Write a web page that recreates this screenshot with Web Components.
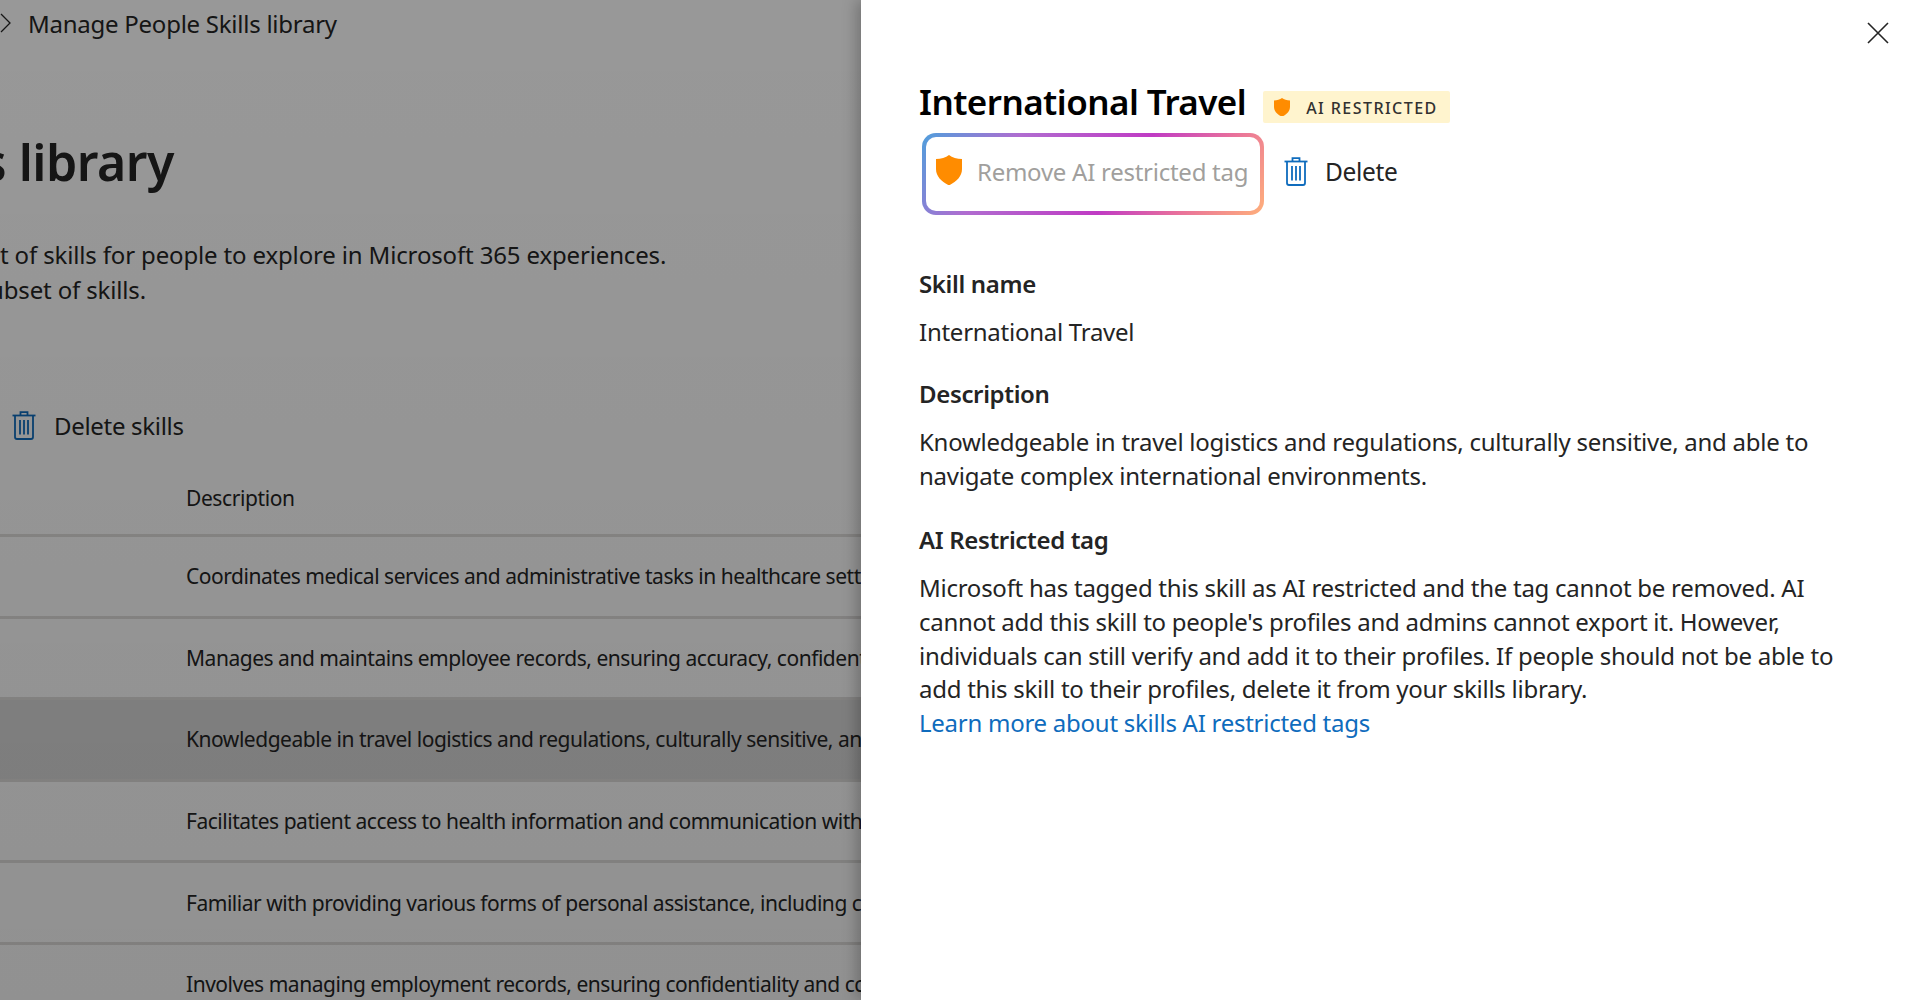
<!DOCTYPE html>
<html lang="en">
<head>
<meta charset="utf-8">
<title>Manage People Skills library</title>
<style>
  html, body { margin: 0; height: 1000px; overflow: hidden; }
  body { font-family: "Noto Sans", "Open Sans", sans-serif; background: #fff; }
</style>
</head>
<body>
<skills-app>
  <library-page slot="page">
    <library-row>Coordinates medical services and administrative tasks in healthcare sett</library-row>
    <library-row>Manages and maintains employee records, ensuring accuracy, confident</library-row>
    <library-row selected>Knowledgeable in travel logistics and regulations, culturally sensitive, an</library-row>
    <library-row>Facilitates patient access to health information and communication with</library-row>
    <library-row>Familiar with providing various forms of personal assistance, including c</library-row>
    <library-row>Involves managing employment records, ensuring confidentiality and cc</library-row>
  </library-page>
  <skill-panel slot="panel"></skill-panel>
</skills-app>
<script>
const shieldSvg = (size) => `<svg width="${size}" height="${size * 1.17}" viewBox="0 0 24 28" aria-hidden="true"><path fill="#ff8c00" d="M12 0 C15 2.6 19.4 3.6 24 3.6 V13 C24 20 18.6 25 12 28 C5.4 25 0 20 0 13 V3.6 C4.6 3.6 9 2.6 12 0 Z"/></svg>`;

class TrashIcon extends HTMLElement {
  constructor() {
    super();
    this.attachShadow({ mode: "open" }).innerHTML = `
      <style>:host { display: inline-flex; color: #0f6cbd; } svg { display: block; }</style>
      <svg width="24" height="29" viewBox="0 0 24 29" fill="none" stroke="currentColor" stroke-width="1.8" aria-hidden="true">
        <path d="M0.5 4.5 H23.5"/>
        <path d="M8.5 4.5 V1.2 H15.5 V4.5"/>
        <path d="M3 4.5 V26 Q3 28 5 28 H19 Q21 28 21 26 V4.5"/>
        <path d="M8 9 V23.5 M12 9 V23.5 M16 9 V23.5"/>
      </svg>`;
  }
}
customElements.define("trash-icon", TrashIcon);

class AiBadge extends HTMLElement {
  constructor() {
    super();
    this.attachShadow({ mode: "open" }).innerHTML = `
      <style>
        :host { display: inline-flex; align-items: center; box-sizing: border-box; height: 32px; padding: 1px 12px 0 11px; gap: 16px;
          background: #fff4ce; border-radius: 2px; color: #323130; font-size: 16px; font-weight: 500; letter-spacing: 1.45px; }
        svg { display: block; margin-top: -1px; }
      </style>
      ${shieldSvg(16)}<span>AI RESTRICTED</span>`;
  }
}
customElements.define("ai-badge", AiBadge);

class GradientButton extends HTMLElement {
  constructor() {
    super();
    this.attachShadow({ mode: "open" }).innerHTML = `
      <style>
        :host { display: inline-flex; align-items: flex-start; box-sizing: border-box; width: 342px; height: 82px; padding: 19px 10px 0 10px; gap: 15px;
          border: 4.5px solid transparent; border-radius: 14px; color: #a19f9d; font-size: 24px; white-space: nowrap; letter-spacing: -0.26px;
          background: linear-gradient(#fff, #fff) padding-box, linear-gradient(125deg, #4f9fdc 0%, #b06cd0 25%, #c03bc4 58%, #e8709c 78%, #ffb07a 100%) border-box; }
        svg { display: block; flex: none; margin-top: -1px; }
        span { line-height: 32px; margin-top: 0; }
      </style>
      ${shieldSvg(26)}<span><slot></slot></span>`;
  }
}
customElements.define("gradient-button", GradientButton);

class LibraryRow extends HTMLElement {
  constructor() {
    super();
    this.attachShadow({ mode: "open" }).innerHTML = `
      <style>
        :host { display: flex; align-items: center; box-sizing: border-box; height: 81.6px; padding: 0 0 0 186px; overflow: hidden; white-space: nowrap;
          font-size: 21px; letter-spacing: -0.47px; border-bottom: 3px solid #e1dfdd; }
        :host([selected]) { background: #dadada; }
      </style>
      <slot></slot>`;
  }
}
customElements.define("library-row", LibraryRow);

class LibraryPage extends HTMLElement {
  constructor() {
    super();
    this.attachShadow({ mode: "open" }).innerHTML = `
      <style>
        :host { display: block; position: relative; height: 1000px; overflow: hidden; background: #fff; color: #242424; }
        :host::after { content: ""; position: absolute; inset: 0; background: linear-gradient(rgba(0,0,0,.405), rgba(0,0,0,.43)); }
        .crumb { display: flex; align-items: center; gap: 16px; height: 46px; font-size: 24px; letter-spacing: -0.25px; }
        .crumb svg { display: block; margin-left: 0; }
        h1 { margin: 84px 0 0 0; font-size: 50px; line-height: 64px; font-weight: 600; letter-spacing: -0.5px; white-space: nowrap; }
        h1 span { display: inline-block; margin-left: -18px; }
        .intro { margin: 43px 0 0 0; font-size: 24px; line-height: 35px; letter-spacing: -0.15px; white-space: nowrap; }
        .intro span { display: inline-block; margin-left: -11px; }
        .toolbar { display: flex; align-items: center; gap: 18px; margin-top: 102px; padding-left: 12px; height: 32px; font-size: 24px; letter-spacing: -0.3px; }
        .head { display: flex; align-items: center; box-sizing: border-box; height: 88px; padding: 12px 0 0 186px; margin-top: 8px; font-size: 21px; letter-spacing: -0.4px; border-bottom: 3px solid #e1dfdd; }
      </style>
      <div class="crumb">
        <svg width="12" height="22" viewBox="0 0 12 22" fill="none" stroke="#242424" stroke-width="1.3" aria-hidden="true"><path d="M1 2 L10 11 L1 20"/></svg>
        <span>Manage People Skills library</span>
      </div>
      <h1><span>s library</span></h1>
      <div class="intro">t of skills for people to explore in Microsoft 365 experiences.<br><span>ubset of skills.</span></div>
      <div class="toolbar"><trash-icon></trash-icon><span>Delete skills</span></div>
      <div class="head">Description</div>
      <slot></slot>`;
  }
}
customElements.define("library-page", LibraryPage);

class SkillPanel extends HTMLElement {
  constructor() {
    super();
    this.attachShadow({ mode: "open" }).innerHTML = `
      <style>
        :host { display: block; position: relative; box-sizing: border-box; height: 1000px; padding: 81px 20px 0 58px; background: #fff; color: #242424;
          box-shadow: -4px 0 14px rgba(0,0,0,.25); }
        .close { position: absolute; top: 21px; right: 30px; display: block; }
        .title { display: flex; align-items: center; gap: 17px; }
        h2 { margin: 0; font-size: 35px; line-height: 42px; font-weight: 600; letter-spacing: -0.55px; color: #000; white-space: nowrap; }
        ai-badge { margin-top: 10px; }
        .actions { display: flex; align-items: center; gap: 18px; margin: 10px 0 0 3px; }
        .del { display: flex; align-items: center; gap: 17px; font-size: 24.5px; letter-spacing: -0.35px; margin: -5px 0 0 0; padding-left: 2px; }
        .del trash-icon { margin-top: -1px; }
        h3 { margin: 0; font-size: 24px; line-height: 34px; font-weight: 600; letter-spacing: -0.35px; }
        p { margin: 0; font-size: 24px; line-height: 33.9px; letter-spacing: -0.26px; }
        .name-h { margin-top: 52px; }
        .gap { margin-top: 14px; }
        .sec { margin-top: 28px; }
        .tag-h { margin-top: 30px; }
        a { color: #0f6cbd; text-decoration: none; }
      </style>
      <svg class="close" width="24" height="24" viewBox="0 0 24 24" fill="none" stroke="#242424" stroke-width="1.6" aria-hidden="true"><path d="M2 2 L22 22 M22 2 L2 22"/></svg>
      <div class="title"><h2>International Travel</h2><ai-badge></ai-badge></div>
      <div class="actions">
        <gradient-button>Remove AI restricted tag</gradient-button>
        <div class="del"><trash-icon></trash-icon><span>Delete</span></div>
      </div>
      <h3 class="name-h">Skill name</h3>
      <p class="gap">International Travel</p>
      <h3 class="sec">Description</h3>
      <p class="gap">Knowledgeable in travel logistics and regulations, culturally sensitive, and able to<br>navigate complex international environments.</p>
      <h3 class="tag-h">AI Restricted tag</h3>
      <p class="gap">Microsoft has tagged this skill as AI restricted and the tag cannot be removed. AI<br>cannot add this skill to people's profiles and admins cannot export it. However,<br>individuals can still verify and add it to their profiles. If people should not be able to<br>add this skill to their profiles, delete it from your skills library.<br><a href="#">Learn more about skills AI restricted tags</a></p>`;
  }
}
customElements.define("skill-panel", SkillPanel);

class SkillsApp extends HTMLElement {
  constructor() {
    super();
    this.attachShadow({ mode: "open" }).innerHTML = `
      <style>
        :host { display: grid; grid-template-columns: 861px 1059px; height: 1000px; overflow: hidden; }
        ::slotted([slot="page"]) { min-width: 0; }
        ::slotted([slot="panel"]) { z-index: 1; }
      </style>
      <slot name="page"></slot><slot name="panel"></slot>`;
  }
}
customElements.define("skills-app", SkillsApp);
</script>
</body>
</html>
